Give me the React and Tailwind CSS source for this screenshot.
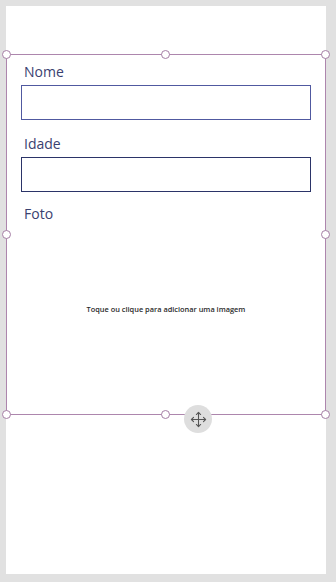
import React from 'react';
import { Move } from 'lucide-react';

const font = { fontFamily: '"Open Sans", "Noto Sans", sans-serif' };

// pontos de redimensionamento da seleção
const handles = [
  'left-[-5px] top-[-5px]',
  'left-[154px] top-[-5px]',
  'right-[-5px] top-[-5px]',
  'left-[-5px] top-[175px]',
  'right-[-5px] top-[175px]',
  'left-[-5px] bottom-[-5px]',
  'left-[154px] bottom-[-5px]',
  'right-[-5px] bottom-[-5px]',
];

const Field = ({ label, className = '', inputClass }) => (
  <div className={className}>
    <div className="pl-[17px] text-[14px] leading-[20px] text-[#3a4170]">{label}</div>
    <div className={`mx-[14px] mt-[3px] h-[35px] border ${inputClass} bg-white`} />
  </div>
);

export default function App() {
  return (
    <div className="w-[336px] h-[582px] bg-[#e1e1e1] pt-[6px] pl-[6px] pr-[10px] pb-[8px]" style={font}>
      <div className="h-full bg-white flex flex-col">
        <div className="h-[48px] shrink-0" />
        <div className="relative h-[361px] shrink-0 border border-[#ad86ad]">
          <Field label="Nome" className="pt-[7px]" inputClass="border-[#5059a0]" />
          <Field label="Idade" className="pt-[14px]" inputClass="border-[#2b3468]" />
          <div className="pt-[12px] pl-[17px] text-[14px] leading-[20px] text-[#3a4170]">Foto</div>
          <div className="mt-[80px] text-center text-[7.4px] font-semibold text-[#2a2a2a]">
            Toque ou clique para adicionar uma imagem
          </div>

          {handles.map((pos, i) => (
            <div
              key={i}
              className={`absolute ${pos} w-[9px] h-[9px] rounded-full bg-white border border-[#a57ea5]`}
            />
          ))}

          <div className="absolute left-[177px] bottom-[-19px] w-[28px] h-[28px] rounded-full bg-[#dedede] flex items-center justify-center">
            <Move size={17} strokeWidth={1.5} className="text-[#555]" />
          </div>
        </div>
      </div>
    </div>
  );
}
